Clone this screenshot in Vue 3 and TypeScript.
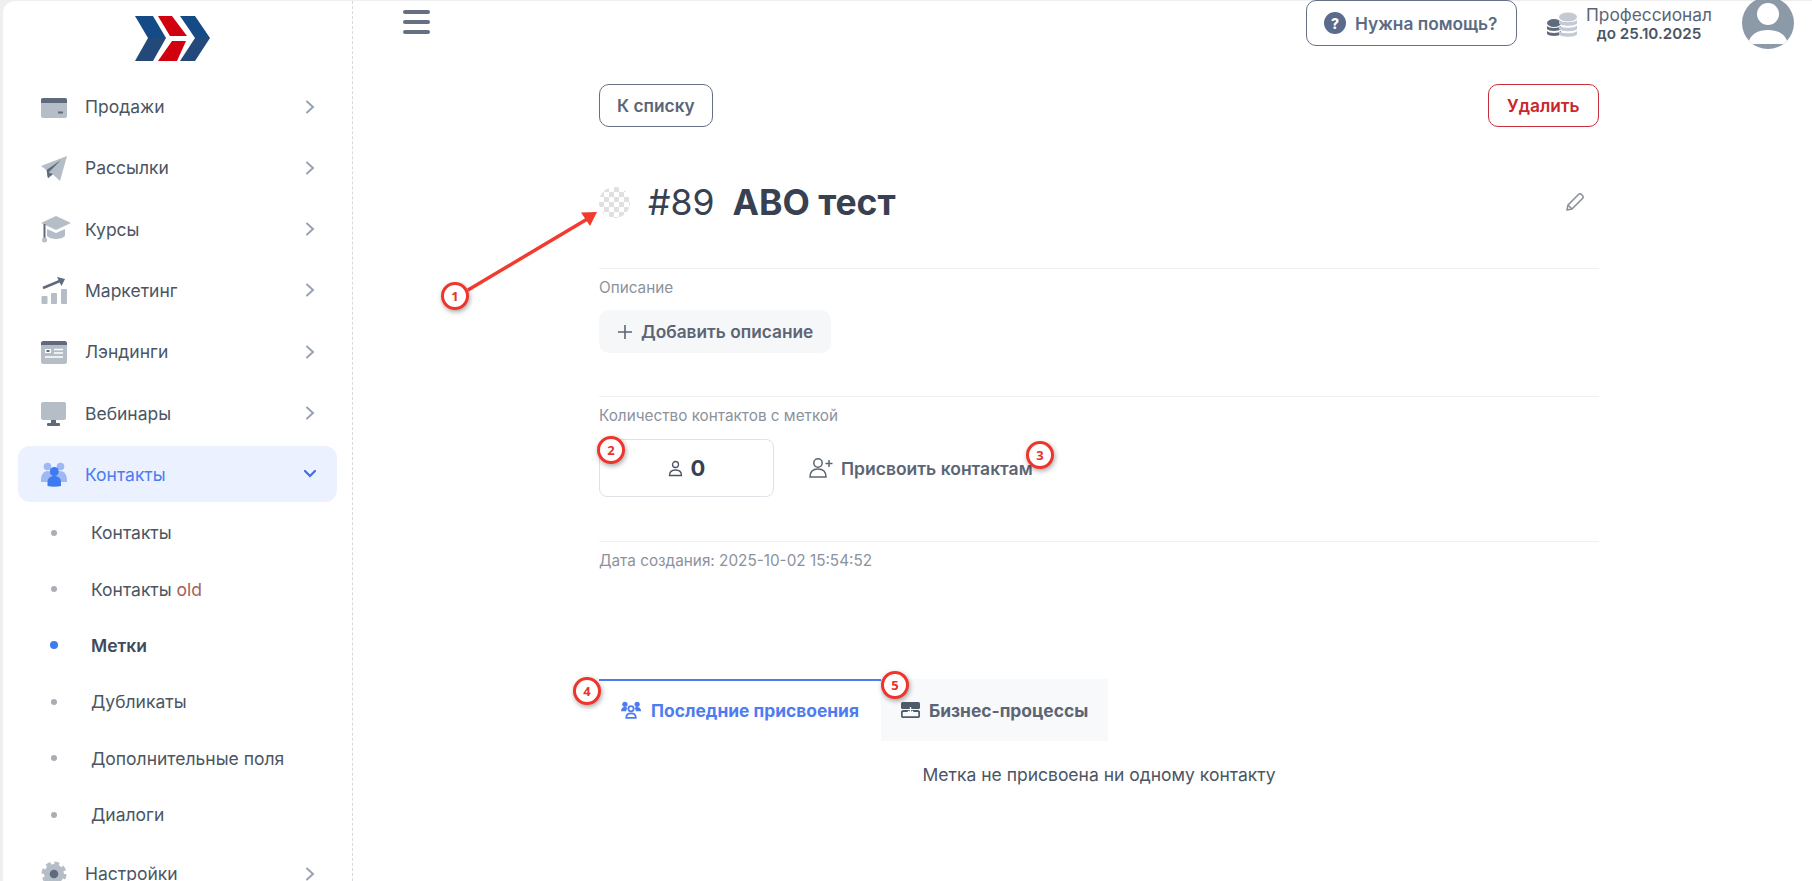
<script setup lang="ts">
interface NavItem {
  label: string
  icon: string
  active?: boolean
}

interface SubItem {
  label: string
  old?: boolean
  current?: boolean
}

const light = '#b5bdc7'
const dark = '#5f6b7c'

const icons: Record<string, string> = {
  card: `<rect x="0" y="4" width="26" height="20" rx="2" fill="${light}"/><path d="M0 9V6a2 2 0 0 1 2-2h22a2 2 0 0 1 2 2v3z" fill="${dark}"/><rect x="17" y="17.5" width="5" height="2" fill="${dark}"/>`,
  plane: `<path d="M26 1 0 11l6 4.500 1 8 5-4 7 6.500z" fill="${light}"/><path d="M5.500 15 20 5 8 17l-1 6z" fill="${dark}"/><path d="M6 17l1 6 5-4z" fill="${dark}"/>`,
  hat: `<path d="M15 0 30 7 15 14 0 7z" fill="${light}"/><path d="M6 13l9 4 9-4v7c-2 2-5 3-9 3s-7-1-9-3z" fill="${light}"/><rect x="2.500" y="8" width="2" height="14" fill="${dark}"/><circle cx="3.500" cy="24" r="2.500" fill="${light}"/>`,
  chart: `<rect x="0.500" y="19" width="6" height="8" rx="1" fill="${light}"/><rect x="10" y="16" width="6" height="11" rx="1" fill="${light}"/><rect x="20" y="12" width="6" height="15" rx="1" fill="${light}"/><path d="M2 11 20 3.500" stroke="${dark}" stroke-width="2.500"/><path d="M16 0l8 2-3.500 7z" fill="${dark}"/>`,
  landing: `<rect x="0" y="2" width="26" height="23" rx="2.500" fill="${light}"/><path d="M0 6V4.500A2.500 2.500 0 0 1 2.500 2h21A2.500 2.500 0 0 1 26 4.500V6z" fill="${dark}"/><rect x="4" y="10" width="6" height="4" fill="#fff"/><path d="M13 10.500h9M13 14h9M4 18h18" stroke="#fff" stroke-width="1.300"/><rect x="5.500" y="11" width="3" height="2" fill="${dark}"/>`,
  screen: `<rect x="0" y="2" width="25" height="18" rx="2" fill="${light}"/><rect x="10" y="20" width="5" height="3" fill="${dark}"/><rect x="6" y="23" width="13" height="3" rx="1" fill="${dark}"/>`,
  users: `<circle cx="6.500" cy="5.500" r="3.800" fill="#9db8f5"/><circle cx="19.500" cy="5.500" r="3.800" fill="#9db8f5"/><path d="M0 19c0-5 2.500-9 6.500-9s7 4 7 9v2H0zM12.500 19c0-5 3-9 7-9s6.500 4 6.500 9v2H12.500z" fill="#9db8f5"/><circle cx="13.300" cy="10.500" r="4.500" fill="#3f7bf0"/><path d="M6.500 25v-4c0-3.500 2.800-6 6.800-6s6.700 2.500 6.700 6v4c-4 1-9.500 1-13.500 0z" fill="#3f7bf0"/>`,
  gear: `<circle cx="13" cy="13" r="10" fill="${light}" stroke="${light}" stroke-width="5" stroke-dasharray="4.500 3.360"/><circle cx="13" cy="13" r="9.500" fill="${light}"/><circle cx="13" cy="13" r="4.300" fill="${dark}"/>`,
}

const topItems: NavItem[] = [
  { label: 'Продажи', icon: 'card' },
  { label: 'Рассылки', icon: 'plane' },
  { label: 'Курсы', icon: 'hat' },
  { label: 'Маркетинг', icon: 'chart' },
  { label: 'Лэндинги', icon: 'landing' },
  { label: 'Вебинары', icon: 'screen' },
  { label: 'Контакты', icon: 'users', active: true },
]

const subItems: SubItem[] = [
  { label: 'Контакты' },
  { label: 'Контакты', old: true },
  { label: 'Метки', current: true },
  { label: 'Дубликаты' },
  { label: 'Дополнительные поля' },
  { label: 'Диалоги' },
]

const marks = [
  { n: 1, left: 441, top: 282 },
  { n: 2, left: 597, top: 436 },
  { n: 3, left: 1026, top: 441 },
  { n: 4, left: 573, top: 677 },
  { n: 5, left: 881, top: 671 },
]
</script>

<template>
  <div class="page">
    <aside class="sidebar">
      <div class="logo">
        <svg width="75" height="45" viewBox="0 0 75 45">
          <path d="M0 0h18l13 22H13z" fill="#144a86" />
          <path d="M13 22h18L18 45H0z" fill="#22497a" />
          <path d="M23 0h14l15 20H35z" fill="#d0000f" />
          <path d="M37 25h14L42 45H23z" fill="#d0000f" />
          <path d="M45 0h15l15 22H60z" fill="#144a86" />
          <path d="M60 22h15L60 45H45z" fill="#22497a" />
        </svg>
      </div>

      <nav class="nav">
        <a v-for="item in topItems" :key="item.label" class="nav-item" :class="{ active: item.active }">
          <svg class="nav-icon" width="26" height="26" viewBox="0 0 26 26" v-html="icons[item.icon]"></svg>
          <span class="nav-label">{{ item.label }}</span>
          <svg class="chevron" width="12" height="14" viewBox="0 0 12 14" fill="none">
            <path v-if="item.active" d="M1 4l5 5 5-5" stroke="#3f6fe0" stroke-width="2.200" stroke-linecap="round" />
            <path v-else d="M3 1.500 9 7l-6 5.500" stroke="#98a2b3" stroke-width="2" stroke-linecap="round" />
          </svg>
        </a>
      </nav>

      <div class="sub-nav">
        <a v-for="sub in subItems" :key="sub.label + sub.old" class="sub-item" :class="{ current: sub.current }">
          <span class="dot"></span>
          <span>{{ sub.label }} <span v-if="sub.old" class="old">old</span></span>
        </a>
      </div>

      <a class="nav-item">
        <svg class="nav-icon" width="26" height="26" viewBox="0 0 26 26" v-html="icons.gear"></svg>
        <span class="nav-label">Настройки</span>
        <svg class="chevron" width="12" height="14" viewBox="0 0 12 14" fill="none">
          <path d="M3 1.500 9 7l-6 5.500" stroke="#98a2b3" stroke-width="2" stroke-linecap="round" />
        </svg>
      </a>
    </aside>

    <main class="main">
      <header class="topbar">
        <div class="burger"><span></span><span></span><span></span></div>
        <div class="topbar-right">
          <button class="help">
            <span class="help-icon">?</span>
            Нужна помощь?
          </button>
          <svg class="coins" width="32" height="28" viewBox="0 0 32 28">
            <g fill="#5f6b7c">
              <ellipse cx="8" cy="11" rx="7" ry="4" />
              <path d="M1 14c2 2.500 12 2.500 14 0v3c-2 2.500-12 2.500-14 0z" />
              <path d="M1 19c2 2.500 12 2.500 14 0v3c-2 2.500-12 2.500-14 0z" />
            </g>
            <g fill="#c3cad3">
              <ellipse cx="22" cy="5" rx="9" ry="4.500" />
              <path d="M13 8c2 3 16 3 18 0v3.500c-2 3-16 3-18 0z" />
              <path d="M13 13.500c2 3 16 3 18 0V17c-2 3-16 3-18 0z" />
              <path d="M13 19c2 3 16 3 18 0v3.500c-2 3-16 3-18 0z" />
            </g>
          </svg>
          <div class="plan">
            <div class="plan-name">Профессионал</div>
            <div class="plan-date">до 25.10.2025</div>
          </div>
          <svg class="avatar" width="52" height="52" viewBox="0 0 52 52">
            <defs>
              <clipPath id="avatar-clip"><circle cx="26" cy="26" r="26" /></clipPath>
            </defs>
            <circle cx="26" cy="26" r="26" fill="#8c99a6" />
            <g clip-path="url(#avatar-clip)" fill="#fff">
              <circle cx="26" cy="17" r="11" />
              <path d="M6 47c2-10 10-14 20-14s18 4 20 14z" />
            </g>
          </svg>
        </div>
      </header>

      <section class="content">
        <div class="actions">
          <button class="btn">К списку</button>
          <button class="btn danger">Удалить</button>
        </div>

        <div class="title-row">
          <span class="swatch"></span>
          <h1 class="title"><span class="num">#89</span><span>АВО тест</span></h1>
          <svg class="pencil" width="20" height="20" viewBox="0 0 20 20" fill="none" stroke="#8a9199" stroke-width="1.600" stroke-linejoin="round">
            <path d="M2 18l1-5L13.500 2.500a2 2 0 0 1 3 0l1 1a2 2 0 0 1 0 3L7 17z" />
            <path d="M3 13l4 4" />
          </svg>
        </div>

        <hr class="line first" />
        <div class="label">Описание</div>
        <button class="add">
          <svg width="16" height="16" viewBox="0 0 16 16" stroke="#5b6575" stroke-width="1.600"><path d="M8 1v14M1 8h14" /></svg>
          Добавить описание
        </button>

        <hr class="line second" />
        <div class="label">Количество контактов с меткой</div>
        <div class="count-row">
          <div class="count-box">
            <svg width="15" height="17" viewBox="0 0 15 17" fill="none" stroke="#4b5563" stroke-width="1.300">
              <circle cx="7.500" cy="4.500" r="3" />
              <path d="M1.500 15.500c0-4 2.500-5.500 6-5.500s6 1.500 6 5.500z" />
            </svg>
            <b>0</b>
          </div>
          <button class="assign">
            <svg width="24" height="22" viewBox="0 0 24 22" fill="none" stroke="#5b6575" stroke-width="1.500">
              <circle cx="9" cy="6" r="4.200" />
              <path d="M1 20c0-6 3.500-8 8-8s8 2 8 8z" />
              <path d="M20 3v7M16.500 6.500h7" />
            </svg>
            Присвоить контактам
          </button>
        </div>

        <hr class="line third" />
        <div class="label">Дата создания: 2025-10-02 15:54:52</div>

        <div class="tabs">
          <div class="tab selected">
            <svg width="23" height="20" viewBox="0 0 23 20">
              <g fill="#4d7cf0">
                <circle cx="4.500" cy="3.500" r="3" />
                <circle cx="18.500" cy="3.500" r="3" />
                <path d="M0 11.500c0-3.500 2-5 4.500-5 1.500 0 2.500.5 3 1.500-1 1-1.500 2-1.500 3.500zM23 11.500c0-3.500-2-5-4.500-5-1.500 0-2.500.5-3 1.500 1 1 1.500 2 1.500 3.500z" />
              </g>
              <g fill="none" stroke="#4d7cf0" stroke-width="2">
                <circle cx="11.500" cy="8.500" r="3" />
                <path d="M6 19c0-4 2.500-5 5.500-5s5.500 1 5.500 5z" />
              </g>
            </svg>
            Последние присвоения
          </div>
          <div class="tab">
            <svg width="19" height="16" viewBox="0 0 19 16">
              <rect x="0" y="0" width="19" height="7" rx="1.500" fill="#4f5a6b" />
              <rect x="0.800" y="9" width="17.400" height="6.200" rx="1.500" fill="none" stroke="#4f5a6b" stroke-width="1.800" />
              <path d="M9.500 5v6M7 9l2.500 2.500L12 9" stroke="#fff" stroke-width="1.400" fill="none" />
            </svg>
            Бизнес-процессы
          </div>
        </div>

        <p class="empty">Метка не присвоена ни одному контакту</p>
      </section>
    </main>

    <svg class="arrow" width="150" height="100" viewBox="0 0 150 100">
      <path d="M13 82 134 10" stroke="#f23b2f" stroke-width="3.500" />
      <path d="M142 4 126 4.500 135 18z" fill="#f23b2f" />
    </svg>
    <span
      v-for="mark in marks"
      :key="mark.n"
      class="mark"
      :style="{ left: mark.left + 'px', top: mark.top + 'px' }"
    >{{ mark.n }}</span>
  </div>
</template>

<style>
html,
body {
  margin: 0;
  overflow: hidden;
  background: #fff;
}
</style>

<style scoped>
.page {
  position: relative;
  display: flex;
  box-sizing: border-box;
  height: 881px;
  padding: 1px 0 0 3px;
  overflow: hidden;
  background: #efefef;
  font-family: Inter, "Noto Sans", sans-serif;
  color: #4b5563;
}

.sidebar {
  flex: none;
  box-sizing: border-box;
  width: 350px;
  padding: 0 15px;
  background: #fff;
  border-right: 1px dashed #d6d9de;
  border-top-left-radius: 12px;
}

.logo {
  display: flex;
  justify-content: center;
  box-sizing: border-box;
  height: 77.500px;
  padding-top: 15px;
  margin-left: -10px;
}

.nav {
  display: flex;
  flex-direction: column;
  gap: 5.33px;
}

.nav-item {
  display: flex;
  align-items: center;
  height: 56px;
  width: 319px;
  box-sizing: border-box;
  padding: 0 21px 0 23px;
  border-radius: 12px;
  font-size: 17.500px;
  color: #4b5563;
}

.nav-item.active {
  background: #ebf1fe;
  color: #4d7cf0;
}

.sub-nav + .nav-item {
  margin-top: 3px;
}

.nav-icon {
  flex: none;
  overflow: visible;
}

.nav-label {
  margin-left: 18px;
  flex: 1;
}

.chevron {
  flex: none;
}

.sub-nav {
  margin-top: 2px;
}

.sub-item {
  display: flex;
  align-items: center;
  height: 56.4px;
  padding-left: 33px;
  font-size: 17.500px;
  color: #4b5563;
}

.sub-item.current {
  font-weight: 600;
  color: #3f4a5a;
}

.dot {
  flex: none;
  width: 6px;
  height: 6px;
  margin-right: 34px;
  border-radius: 50%;
  background: #a9adb5;
}

.current .dot {
  width: 8px;
  height: 8px;
  margin: 0 33px 0 -1px;
  background: #3f7bf0;
}

.old {
  color: #a5605c;
}

.main {
  flex: 1;
  min-width: 0;
  background: #fff;
}

.topbar {
  display: flex;
  align-items: center;
  justify-content: space-between;
  height: 44px;
  padding: 0 18px 0 50px;
}

.burger {
  display: flex;
  flex-direction: column;
  gap: 6px;
  width: 27px;
  margin-top: -2px;
}

.burger span {
  height: 4px;
  border-radius: 2px;
  background: #667085;
}

.topbar-right {
  display: flex;
  align-items: center;
}

.help {
  display: flex;
  align-items: center;
  gap: 9px;
  box-sizing: border-box;
  width: 211px;
  height: 46px;
  padding: 0 17px;
  border: 1px solid #667085;
  border-radius: 10px;
  background: #fff;
  font: 600 17.300px Inter, sans-serif;
  color: #5b6b85;
}

.help-icon {
  display: flex;
  align-items: center;
  justify-content: center;
  width: 22px;
  height: 22px;
  border-radius: 50%;
  background: #5a6b8c;
  color: #fff;
  font-size: 14px;
  font-weight: 800;
}

.coins {
  flex: none;
  margin: 6px 7px 0 29px;
}

.plan {
  width: 128px;
  text-align: center;
  line-height: 20px;
}

.plan-name {
  font-size: 17.300px;
  color: #5b6575;
}

.plan-date {
  font-size: 15.200px;
  font-weight: 600;
  color: #4b5563;
  line-height: 17px;
}

.avatar {
  flex: none;
  margin-left: 29px;
}

.content {
  box-sizing: border-box;
  width: 1000px;
  margin: 39px 0 0 246px;
}

.actions {
  display: flex;
  justify-content: space-between;
}

.btn {
  height: 43px;
  padding: 0 17px;
  border: 1px solid #667085;
  border-radius: 10px;
  background: #fff;
  font: 600 17.300px Inter, sans-serif;
  color: #5b6575;
}

.btn.danger {
  padding: 0 18.500px;
  border-color: #c5303a;
  color: #c9252d;
}

.title-row {
  display: flex;
  align-items: center;
  height: 40px;
  margin-top: 55px;
}

.swatch {
  flex: none;
  width: 31px;
  height: 31px;
  border-radius: 50%;
  background: repeating-conic-gradient(#e0e0e0 0 25%, #fff 0 50%) 0 0 / 10px 10px;
}

.title {
  display: flex;
  gap: 18px;
  flex: 1;
  margin: 0 0 0 18px;
  font-size: 35.500px;
  font-weight: 700;
  color: #374151;
}

.num {
  font-weight: 400;
}

.pencil {
  margin-right: 14px;
}

.line {
  margin: 0;
  border: 0;
  border-top: 1px solid #eef0f2;
}

.line.first {
  margin-top: 46px;
}

.line.second {
  margin-top: 43px;
}

.line.third {
  margin-top: 44px;
}

.label {
  margin-top: 9px;
  font-size: 15.300px;
  line-height: 20px;
  color: #8b929c;
}

.add {
  display: flex;
  align-items: center;
  gap: 8px;
  height: 43px;
  margin-top: 12px;
  padding: 0 18px;
  border: 0;
  border-radius: 10px;
  background: #f6f7f9;
  font: 600 17.300px Inter, sans-serif;
  color: #5b6575;
}

.count-row {
  display: flex;
  align-items: center;
  gap: 35px;
  margin-top: 13px;
}

.count-box {
  display: flex;
  align-items: center;
  justify-content: center;
  gap: 8px;
  box-sizing: border-box;
  width: 175px;
  height: 58px;
  border: 1px solid #dfe2e6;
  border-radius: 8px;
}

.count-box b {
  font-size: 22px;
  font-weight: 700;
  color: #374151;
}

.assign {
  display: flex;
  align-items: center;
  gap: 8px;
  padding: 0;
  border: 0;
  background: none;
  font: 600 17.500px Inter, sans-serif;
  color: #5b6575;
}

.tabs {
  display: flex;
  margin-top: 108px;
}

.tab {
  display: flex;
  align-items: center;
  box-sizing: border-box;
  height: 62px;
  gap: 9px;
  padding: 0 20px;
  background: #f8f9fa;
  font-size: 17.400px;
  font-weight: 700;
  color: #5b6575;
  white-space: nowrap;
}

.tab.selected {
  width: 282px;
  gap: 10px;
  padding: 0 22px 2px;
  border-top: 2px solid #4d7cf0;
  background: #fff;
  color: #4d7cf0;
}

.empty {
  margin: 24px 0 0;
  text-align: center;
  font-size: 17.500px;
  line-height: 20px;
  color: #4b5563;
}

.arrow {
  position: absolute;
  left: 455px;
  top: 208px;
}

.mark {
  position: absolute;
  display: flex;
  align-items: center;
  justify-content: center;
  box-sizing: border-box;
  width: 28px;
  height: 28px;
  border: 3px solid #f0342c;
  border-radius: 50%;
  background: #fff;
  box-shadow: 1px 2px 5px rgba(0, 0, 0, 0.35);
  font: 700 13px "Open Sans", sans-serif;
  color: #e8322c;
}
</style>
